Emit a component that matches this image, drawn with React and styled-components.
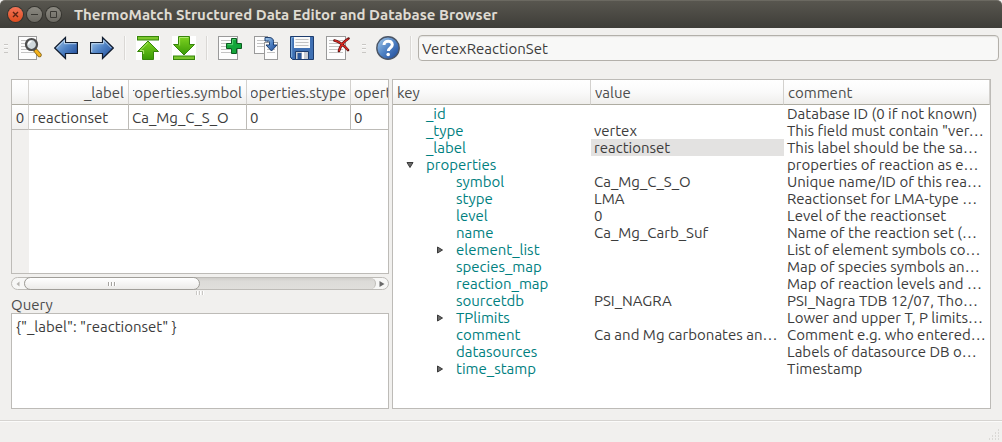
import React from "react";
import styled, { createGlobalStyle } from "styled-components";

const GlobalStyle = createGlobalStyle`
  *, *::before, *::after { box-sizing: border-box; }
  html, body { margin: 0; padding: 0; }
  body {
    background: #f1f0ee;
    color: #3c3c3c;
    font-family: Ubuntu, "Noto Sans", sans-serif;
    font-size: 15px;
    line-height: 17px;
  }
  button, input, textarea { font: inherit; color: inherit; }
`;

const line = "#bdbbb7";

const Window = styled.div`
  display: flex;
  flex-direction: column;
  min-height: 100vh;
  overflow: hidden;
`;

const TitleBar = styled.header`
  display: flex;
  align-items: center;
  height: 28px;
  padding: 0 8px;
  gap: 4px;
  background: linear-gradient(#58564f, #3e3d38);
  border-top: 1px solid #6b6961;
  border-radius: 5px 5px 0 0;
`;

const WindowButton = styled.button`
  display: flex;
  width: 15px;
  height: 15px;
  padding: 0;
  border: 0;
  border-radius: 50%;
  background: ${(p) =>
    p.$close
      ? "linear-gradient(#f37458, #de4c1e)"
      : "linear-gradient(#8b8981, #6c6a63)"};
  box-shadow: 0 0 0 1px #35342f;
`;

const Title = styled.h1`
  margin: 0 0 0 9px;
  font-size: 15px;
  font-weight: 700;
  line-height: 20px;
  color: #dfdbd2;
  white-space: nowrap;
`;

const ToolBar = styled.div`
  display: flex;
  align-items: center;
  height: 40px;
  padding: 0 3px 0 2px;
`;

const Grip = styled.div`
  width: 4px;
  height: 9px;
  flex: none;
  margin-left: 2px;
  background: repeating-linear-gradient(#c9c7c4 0 1px, #fbfbfa 1px 2px, transparent 2px 4px);
`;

const ToolGroup = styled.div`
  display: flex;
  gap: 12px;
  padding: 0 10px;
`;

const Separator = styled.div`
  width: 2px;
  height: 24px;
  flex: none;
  background: #dad8d5;
  border-right: 1px solid #f9f9f8;
`;

const ToolButton = styled.button`
  display: flex;
  width: 24px;
  height: 24px;
  padding: 0;
  border: 0;
  background: none;
`;

const SchemaInput = styled.input`
  flex: 1;
  min-width: 0;
  height: 26px;
  margin-left: 6px;
  padding: 0 3px;
  border: 1px solid #b3b0aa;
  border-radius: 4px;
  background: #f8f8f7;
  box-shadow: inset 0 1px 1px #e3e2df;
  outline: none;
`;

const Workspace = styled.main`
  flex: 1;
  display: grid;
  grid-template-columns: 378fr 599fr;
  gap: 3px;
  padding: 11px 11px;
`;

const LeftColumn = styled.div`
  display: flex;
  flex-direction: column;
  min-width: 0;
`;

const Panel = styled.section`
  border: 1px solid ${line};
  background: #fff;
  overflow: hidden;
  min-width: 0;
`;

const ResultPanel = styled(Panel)`
  flex: 9 1 0;
  display: flex;
  flex-direction: column;
  align-items: flex-start;
`;

const RowHeaderFill = styled.div`
  flex: 1;
  width: 17px;
  background: #f1f0ee;
`;

const Grid = styled.table`
  table-layout: fixed;
  border-collapse: separate;
  border-spacing: 0;
  width: 100%;
`;

const Col = styled.col`
  width: ${(p) => p.$w || "auto"};
`;

const HeadCell = styled.th`
  height: 25px;
  padding: 0 ${(p) => (p.$cut ? "0" : "4px")} 0 ${(p) => (p.$cut ? "3px" : "4px")};
  border-right: ${(p) => (p.$cut ? "0" : "1px solid #d3d1ce")};
  border-bottom: 1px solid #aeaca2;
  background: linear-gradient(#fff, #fafafa 50%, #efeeec);
  color: #4c4c4c;
  font-weight: 400;
  text-align: left;
  white-space: nowrap;
  overflow: hidden;
`;

const EndClip = styled.div`
  display: flex;
  justify-content: flex-end;
  overflow: hidden;
`;

const RowNumber = styled.th`
  height: 25px;
  padding: 0;
  border-right: 1px solid #d3d1ce;
  border-bottom: 1px solid ${line};
  background: linear-gradient(#fff, #f1f0ee);
  font-weight: 400;
  text-align: center;
`;

const DataCell = styled.td`
  height: 25px;
  padding: 0 3px;
  border-right: 1px solid ${line};
  border-bottom: 1px solid ${line};
  white-space: nowrap;
  &:last-child { border-right: 0; }
`;

const ScrollBar = styled.div`
  display: flex;
  flex: none;
  height: 13px;
  margin-top: 3px;
  border: 1px solid ${line};
  border-radius: 7px;
  background: #f7f7f6;
`;

const ScrollArrow = styled.button`
  display: flex;
  align-items: center;
  justify-content: center;
  width: 12px;
  padding: 0;
  border: 0;
  background: none;
`;

const ScrollTrack = styled.div`
  flex: 1;
  display: flex;
  border-right: 1px solid ${line};
  border-radius: 6px;
  background: linear-gradient(#cfcdc9, #dcdbd8 30%, #e0dfdc);
`;

const ScrollThumb = styled.div`
  display: flex;
  align-items: center;
  justify-content: center;
  width: 50%;
  margin: -1px 0;
  border: 1px solid #a09e99;
  border-radius: 7px;
  background: linear-gradient(#fff, #ecebe9);
`;

const Ticks = styled.div`
  width: 8px;
  height: 4px;
  background: repeating-linear-gradient(90deg, ${(p) => p.$c || "#a5a39f"} 0 1px, #fff 1px 2px, transparent 2px 3px);
`;

const SplitHandle = styled.div`
  display: flex;
  align-items: center;
  justify-content: center;
  flex: none;
  height: 6px;
`;

const QueryLabel = styled.label`
  height: 17px;
  flex: none;
  color: #4c4c4c;
`;

const QueryText = styled.textarea`
  flex: 4 1 0;
  display: block;
  width: 100%;
  min-height: 0;
  padding: 4px;
  border: 1px solid ${line};
  border-radius: 0;
  background: #fff;
  outline: none;
  resize: none;
`;

const TreeCell = styled.td`
  height: 17px;
  padding: 0 0 0 3px;
  line-height: 17px;
  white-space: nowrap;
  overflow: hidden;
  background: ${(p) => (p.$selected ? "#e3e2e1" : "none")};
`;

const KeyCell = styled(TreeCell)`
  color: #008080;
  padding-left: ${(p) => 13 + p.$level * 30}px;
`;

const KeyContent = styled.div`
  display: flex;
  align-items: center;
`;

const Expander = styled.span`
  display: flex;
  width: 20px;
  flex: none;
`;

const StatusBar = styled.footer`
  display: flex;
  align-items: flex-end;
  justify-content: flex-end;
  height: 22px;
  border-top: 1px solid #d6d4d1;
  box-shadow: inset 0 1px 0 #fbfbfa;
  padding: 0 2px 2px 0;
`;

const Sheet = ({ x = 0.5, y = 0.5, w = 19, h = 23 }) => (
  <g>
    <rect x={x} y={y} width={w} height={h} fill="#fdfdfd" stroke="#9a9a9a" />
    {Array.from({ length: Math.floor((h - 6) / 3) }, (_, i) => (
      <path key={i} d={`M${x + 2.5} ${y + 4 + i * 3}h${w - 5}`} stroke="#c3c3c3" />
    ))}
  </g>
);

const Icon = ({ children }) => (
  <svg width="24" height="24" viewBox="0 0 24 24" aria-hidden="true">
    <defs>
      <linearGradient id="blue" x1="0" y1="0" x2="1" y2="1">
        <stop offset="0" stopColor="#a9cdec" />
        <stop offset="0.5" stopColor="#4f82c4" />
        <stop offset="1" stopColor="#1c4594" />
      </linearGradient>
      <linearGradient id="green" x1="0" y1="0" x2="0" y2="1">
        <stop offset="0" stopColor="#7ed321" />
        <stop offset="1" stopColor="#3a9a06" />
      </linearGradient>
    </defs>
    {children}
  </svg>
);

const icons = {
  preview: (
    <Icon>
      <Sheet w={18} />
      <path d="M17.500 14.500l4 4.500" stroke="#8a6a20" strokeWidth="4.400" strokeLinecap="round" />
      <path d="M18 15l3.500 4" stroke="#f5b21a" strokeWidth="2.800" strokeLinecap="round" />
      <circle cx="13.500" cy="8.500" r="5.500" fill="#cfd8dc" stroke="#4d4d4d" strokeWidth="2.200" />
      <path d="M10.500 8.500a3 3 0 0 1 3-3" fill="none" stroke="#fff" strokeWidth="1.500" />
    </Icon>
  ),
  back: (
    <Icon>
      <path d="M.7 12L11.500 1.500v5h12v11h-12v5z" fill="url(#blue)" stroke="#111c2e" strokeWidth="1.200" />
      <path d="M2.500 12l8-7.800v3.500h11.800" fill="none" stroke="#cfe3f5" strokeWidth=".8" />
    </Icon>
  ),
  forward: (
    <Icon>
      <path d="M23.300 12L12.500 1.500v5H.6v11h11.900v5z" fill="url(#blue)" stroke="#111c2e" strokeWidth="1.200" />
      <path d="M1.700 16V7.700h11.900V4.200l7.800 7.800" fill="none" stroke="#cfe3f5" strokeWidth=".8" />
    </Icon>
  ),
  top: (
    <Icon>
      <rect width="24" height="24" fill="#fff" />
      <rect x="1.500" y=".5" width="21" height="3.500" fill="#7bc62d" stroke="#37860b" />
      <path d="M12 5L22.500 15.500h-5v8h-11v-8h-5z" fill="url(#green)" stroke="#37860b" />
      <path d="M12 6.600L4 14.500h3.600v3.500" fill="none" stroke="#b5ec78" strokeWidth=".9" />
    </Icon>
  ),
  bottom: (
    <Icon>
      <rect width="24" height="24" fill="#fff" />
      <path d="M12 19L1.500 8.500h5v-8h11v8h5z" fill="url(#green)" stroke="#37860b" />
      <path d="M7.600 9.500v-8h8.800" fill="none" stroke="#b5ec78" strokeWidth=".9" />
      <rect x="1.500" y="20" width="21" height="3.500" fill="#7bc62d" stroke="#37860b" />
    </Icon>
  ),
  add: (
    <Icon>
      <Sheet />
      <path d="M13.500 2.500h5v5h5v5h-5v5h-5v-5h-5v-5h5z" fill="#14a53a" stroke="#0b5c20" />
      <path d="M9.600 8.700h5V3.600h3" fill="none" stroke="#6fdc83" strokeWidth=".8" />
    </Icon>
  ),
  copy: (
    <Icon>
      <Sheet w={13} h={17} />
      <Sheet x={10.5} y={6.5} w={13} h={17} />
      <path d="M11 1.500h4c3 0 4.500 1.500 4.500 4v3.500h3.500l-5.500 6-5.500-6H15.500V6.500c0-1-.5-1.500-1.500-1.500h-3z" fill="url(#blue)" stroke="#1f3f6e" />
    </Icon>
  ),
  save: (
    <Icon>
      <path d="M.5.5h23v23H2.500l-2-2z" fill="#3f70b3" stroke="#1d3c6d" />
      <path d="M1.700 21V1.700h2" fill="none" stroke="#86b4e2" />
      <rect x="4" y="1" width="16" height="11" fill="#fafafa" />
      <path d="M5.500 3.500h13M5.500 6.500h13M5.500 9.500h13" stroke="#c3c3c3" />
      <path d="M5.500 15.500h13v8h-13z" fill="#c8ccd3" stroke="#1d3c6d" />
      <rect x="7.500" y="17" width="4" height="6" fill="#2a579a" />
      <path d="M13 16v7" stroke="#fff" strokeWidth="2" />
    </Icon>
  ),
  remove: (
    <Icon>
      <Sheet />
      <path d="M8.500 4.500c5 1 9 4.500 13.500 9.500M22.500 2.500c-5 3-8 7-9.500 12.500" fill="none" stroke="#5a1010" strokeWidth="2.600" strokeLinecap="round" />
      <path d="M9 4.600c5 1.200 8.500 4.400 12.500 8.900M22 3c-4.500 2.800-7.500 6.500-8.800 11.500" fill="none" stroke="#dc2a22" strokeWidth="1.400" strokeLinecap="round" />
    </Icon>
  ),
  help: (
    <Icon>
      <circle cx="12" cy="12" r="11.200" fill="url(#blue)" stroke="#4c5666" strokeWidth="1.400" />
      <path d="M8 9c0-5.200 8.300-5 8.300-.3 0 3-4 3.200-4 6.300" fill="none" stroke="#fff" strokeWidth="3" />
      <circle cx="12.200" cy="18.500" r="1.800" fill="#fff" />
    </Icon>
  ),
};

const Triangle = ({ dir, color = "#6a6a6a", outline = "#3a3a3a" }) => {
  const paths = {
    right: "M1.500 1v6L6.500 4z",
    left: "M5.500 1.500v5L2.500 4z",
    down: "M1 1.500h6L4 6.500z",
  };
  return (
    <svg width="8" height="8" viewBox="0 0 8 8" aria-hidden="true">
      <path d={paths[dir]} fill={color} stroke={outline} />
    </svg>
  );
};

const Tool = ({ name, label }) => (
  <ToolButton type="button" aria-label={label}>
    {icons[name]}
  </ToolButton>
);

const rows = [
  [0, "_id", "", "Database ID (0 if not known)"],
  [0, "_type", "vertex", 'This field must contain "ver…'],
  [0, "_label", "reactionset", "This label should be the sa…"],
  [0, "properties", "", "properties of reaction as e…", "down"],
  [1, "symbol", "Ca_Mg_C_S_O", "Unique name/ID of this rea…"],
  [1, "stype", "LMA", "Reactionset for LMA-type …"],
  [1, "level", "0", "Level of the reactionset"],
  [1, "name", "Ca_Mg_Carb_Suf", "Name of the reaction set (…"],
  [1, "element_list", "", "List of element symbols co…", "right"],
  [1, "species_map", "", "Map of species symbols an…"],
  [1, "reaction_map", "", "Map of reaction levels and …"],
  [1, "sourcetdb", "PSI_NAGRA", "PSI_Nagra TDB 12/07, Tho…"],
  [1, "TPlimits", "", "Lower and upper T, P limits…", "right"],
  [1, "comment", "Ca and Mg carbonates an…", "Comment e.g. who entered…"],
  [1, "datasources", "", "Labels of datasource DB o…"],
  [1, "time_stamp", "", "Timestamp", "right"],
];

export default function App() {
  return (
    <Window>
      <GlobalStyle />
      <TitleBar>
        <WindowButton $close type="button" aria-label="Close">
          <svg width="15" height="15"><path d="M5 5l5 5M10 5l-5 5" stroke="#5b2414" strokeWidth="1.400" /></svg>
        </WindowButton>
        <WindowButton type="button" aria-label="Minimize">
          <svg width="15" height="15"><path d="M4 7.500h7" stroke="#3a3934" /></svg>
        </WindowButton>
        <WindowButton type="button" aria-label="Maximize">
          <svg width="15" height="15"><path d="M4.500 4.500h6v6h-6z" fill="none" stroke="#3a3934" /></svg>
        </WindowButton>
        <Title>ThermoMatch Structured Data Editor and Database Browser</Title>
      </TitleBar>

      <ToolBar>
        <Grip />
        <ToolGroup>
          <Tool name="preview" label="Preview" />
          <Tool name="back" label="Previous" />
          <Tool name="forward" label="Next" />
        </ToolGroup>
        <Separator />
        <ToolGroup>
          <Tool name="top" label="Export" />
          <Tool name="bottom" label="Import" />
        </ToolGroup>
        <Separator />
        <ToolGroup>
          <Tool name="add" label="New record" />
          <Tool name="copy" label="Clone record" />
          <Tool name="save" label="Save record" />
          <Tool name="remove" label="Delete record" />
        </ToolGroup>
        <Grip />
        <ToolGroup>
          <Tool name="help" label="Help" />
        </ToolGroup>
        <Separator />
        <SchemaInput aria-label="Schema" defaultValue="VertexReactionSet" />
      </ToolBar>

      <Workspace>
        <LeftColumn>
          <ResultPanel>
            <Grid>
              <colgroup>
                <Col $w="17px" />
                <Col $w="100px" />
                <Col $w="118px" />
                <Col $w="104px" />
                <Col />
              </colgroup>
              <thead>
                <tr>
                  <HeadCell />
                  <HeadCell scope="col"><EndClip>_label</EndClip></HeadCell>
                  <HeadCell scope="col"><EndClip>roperties.symbol</EndClip></HeadCell>
                  <HeadCell scope="col"><EndClip>operties.stype</EndClip></HeadCell>
                  <HeadCell scope="col" $cut>opert</HeadCell>
                </tr>
              </thead>
              <tbody>
                <tr>
                  <RowNumber scope="row">0</RowNumber>
                  <DataCell>reactionset</DataCell>
                  <DataCell>Ca_Mg_C_S_O</DataCell>
                  <DataCell>0</DataCell>
                  <DataCell>0</DataCell>
                </tr>
              </tbody>
            </Grid>
            <RowHeaderFill />
          </ResultPanel>
          <ScrollBar>
            <ScrollArrow type="button" aria-label="Scroll left">
              <Triangle dir="left" color="#b5b3af" outline="none" />
            </ScrollArrow>
            <ScrollTrack>
              <ScrollThumb><Ticks /></ScrollThumb>
            </ScrollTrack>
            <ScrollArrow type="button" aria-label="Scroll right">
              <Triangle dir="right" outline="none" />
            </ScrollArrow>
          </ScrollBar>
          <SplitHandle><Ticks $c="#c9c7c4" /></SplitHandle>
          <QueryLabel htmlFor="query">Query</QueryLabel>
          <QueryText id="query" spellCheck={false} defaultValue={'{"_label": "reactionset" }'} />
        </LeftColumn>

        <Panel>
          <Grid>
            <colgroup>
              <Col $w="198px" />
              <Col $w="193px" />
              <Col />
            </colgroup>
            <thead>
              <tr>
                <HeadCell scope="col">key</HeadCell>
                <HeadCell scope="col">value</HeadCell>
                <HeadCell scope="col">comment</HeadCell>
              </tr>
            </thead>
            <tbody>
              {rows.map(([level, key, value, comment, expander]) => (
                <tr key={key}>
                  <KeyCell $level={level}>
                    <KeyContent>
                      <Expander>{expander && <Triangle dir={expander} />}</Expander>
                      {key}
                    </KeyContent>
                  </KeyCell>
                  <TreeCell $selected={key === "_label"}>{value}</TreeCell>
                  <TreeCell>{comment}</TreeCell>
                </tr>
              ))}
            </tbody>
          </Grid>
        </Panel>
      </Workspace>

      <StatusBar>
        <svg width="11" height="11" aria-hidden="true">
          <path d="M9 1h1M6 4h1M9 4h1M3 7h1M6 7h1M9 7h1M0 10h1M3 10h1M6 10h1M9 10h1" stroke="#c4c2be" />
        </svg>
      </StatusBar>
    </Window>
  );
}
